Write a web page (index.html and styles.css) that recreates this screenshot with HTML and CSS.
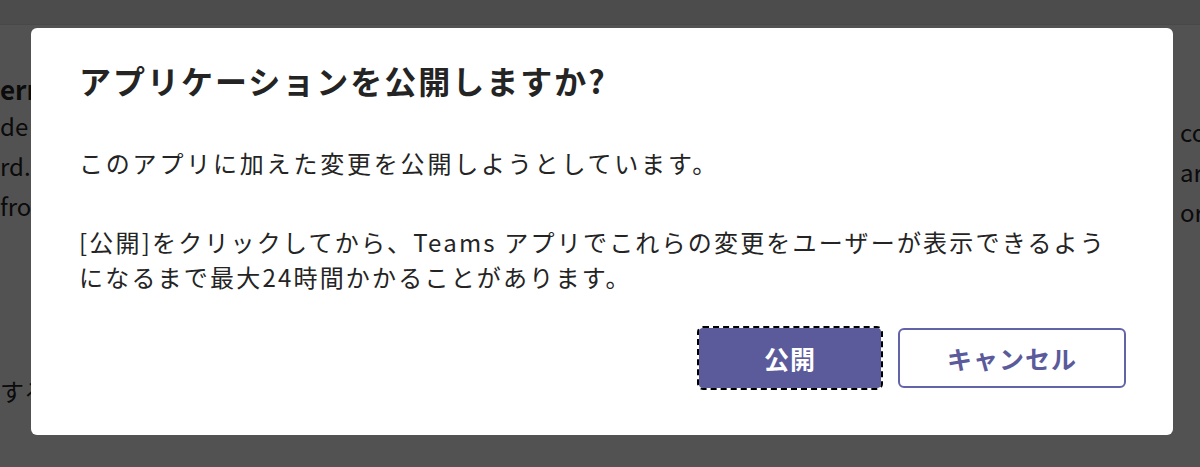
FILE: index.html
```html
<!DOCTYPE html>
<html>
  <head>
    <meta http-equiv="content-type" content="text/html; charset=UTF-8">
    <title>アプリケーションを公開しますか?</title>
    <meta name="viewport" content="width=device-width">
    <link rel="stylesheet" href="styles.css">
  </head>
  <body>
    <div class="page">
      <header class="topBar"></header>
      <main class="pageBody">
        <section class="leftColumn">
          <h3 class="pageHeading">err</h3>
          <p class="pageLine">de</p>
          <p class="pageLine">rd.</p>
          <p class="pageLine">fron</p>
          <p class="pageLine lastLine">する</p>
        </section>
        <section class="rightColumn">
          <p class="pageLine">co</p>
          <p class="pageLine">ar</p>
          <p class="pageLine">or</p>
        </section>
      </main>
    </div>
    <div class="overlay"></div>
    <div class="dialog" role="dialog" aria-labelledby="dialogTitle">
      <h2 id="dialogTitle" class="dialogTitle">アプリケーションを公開しますか?</h2>
      <p class="dialogText">このアプリに加えた変更を公開しようとしています。</p>
      <p class="dialogText secondText">[公開]をクリックしてから、Teams アプリでこれらの変更をユーザーが表示できるようになるまで最大24時間かかることがあります。</p>
      <div class="dialogActions">
        <button class="button primary" type="button">公開</button>
        <button class="button secondary" type="button">キャンセル</button>
      </div>
    </div>
  </body>
</html>
```

FILE: styles.css
```css
:root {
  --text: #242424;
  --brand: #5b5b9b;
  --brandBorder: #6264a7;
  --overlay: rgba(0, 0, 0, 0.68);
}
html, body {
  margin: 0;
  height: 100%;
  overflow: hidden;
}
body {
  background-color: #ffffff;
  color: var(--text);
  font-family: "Noto Sans CJK JP", "Noto Sans", sans-serif;
}
.page {
  height: 100%;
}
.topBar {
  height: 24px;
  background-color: #ebebeb;
  border-bottom: 1px solid #e0e0e0;
}
.pageBody {
  display: flex;
  justify-content: space-between;
  padding-top: 44px;
}
.leftColumn, .rightColumn {
  display: flex;
  flex-direction: column;
  white-space: nowrap;
}
.leftColumn {
  width: 31px;
}
.rightColumn {
  width: 20px;
  padding-top: 43px;
}
.pageHeading {
  margin: 0 0 -3px;
  font-size: 26px;
  line-height: 40px;
  font-weight: 700;
}
.pageLine {
  margin: 0;
  font-size: 24px;
  line-height: 40px;
}
.lastLine {
  margin-top: 145px;
}
.overlay {
  position: fixed;
  inset: 0;
  background-color: var(--overlay);
}
.dialog {
  position: fixed;
  left: 31px;
  top: 28px;
  width: 1142px;
  height: 407px;
  box-sizing: border-box;
  padding: 32px 47px 47px 48px;
  background-color: #ffffff;
  border-radius: 6px;
  display: flex;
  flex-direction: column;
}
.dialogTitle {
  margin: 0 0 45px;
  font-size: 32px;
  line-height: 40px;
  font-weight: 700;
  letter-spacing: 2px;
}
.dialogText {
  margin: 0;
  font-size: 24px;
  line-height: 35px;
  letter-spacing: 2.8px;
}
.secondText {
  margin-top: 44px;
  letter-spacing: 2.2px;
}
.dialogActions {
  margin-top: auto;
  display: flex;
  justify-content: flex-end;
  gap: 17px;
}
.button {
  height: 60px;
  box-sizing: border-box;
  border-radius: 4px;
  font-family: inherit;
  font-size: 25px;
  font-weight: 700;
  letter-spacing: 1px;
  cursor: pointer;
}
.primary {
  width: 182px;
  background-color: var(--brand);
  color: #ffffff;
  border: none;
  outline: 2px dashed #000000;
  outline-offset: 0;
}
.secondary {
  width: 228px;
  background-color: #ffffff;
  color: var(--brand);
  border: 2px solid var(--brandBorder);
  border-radius: 6px;
}
```
